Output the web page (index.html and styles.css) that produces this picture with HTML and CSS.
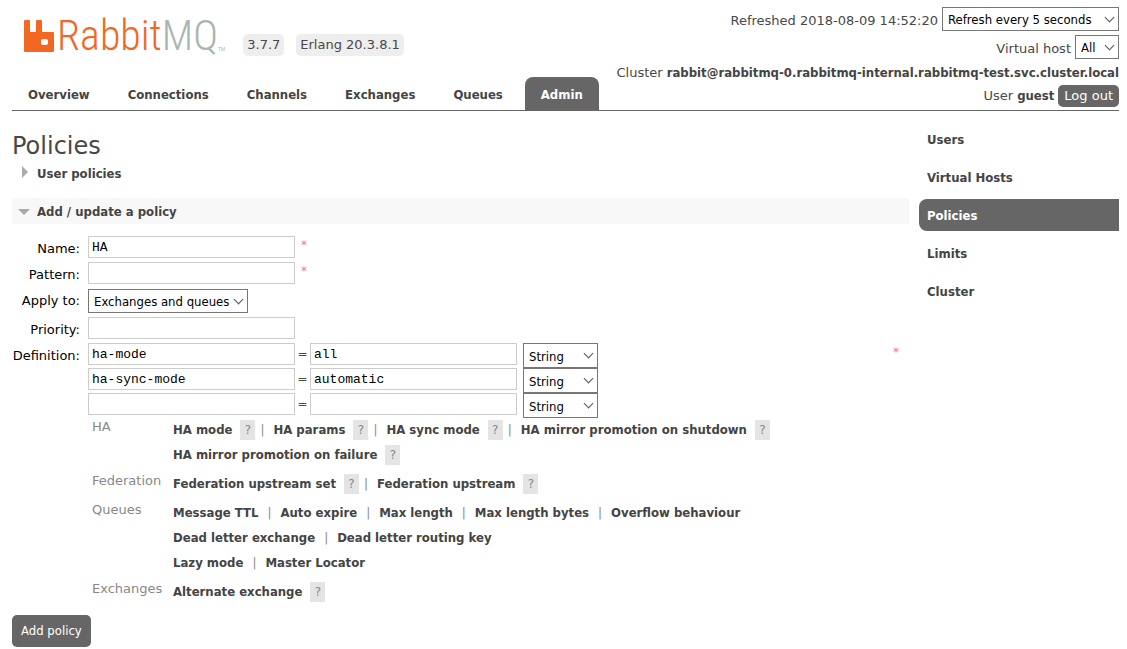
FILE: index.html
```html
<!DOCTYPE html>
<html lang="en">
<head>
<meta charset="utf-8">
<title>RabbitMQ Management</title>
<link rel="stylesheet" href="styles.css">
</head>
<body>
<header class="header">
  <div class="brand-area">
    <div class="brand">
      <a class="logo" href="#" aria-label="RabbitMQ">
        <svg class="logo-mark" viewBox="0 0 30 33" width="30" height="33" aria-hidden="true"><path fill="#f26822" fill-rule="evenodd" d="M1 1H5Q6 1 6 2V12Q6 13 7 13H11Q12 13 12 12V2Q12 1 13 1H17Q18 1 18 2V12Q18 13 19 13H29Q30 13 30 14V32Q30 33 29 33H1Q0 33 0 32V2Q0 1 1 1ZM19 20Q17 20 17 22V24Q17 26 19 26H22Q24 26 24 24V22Q24 20 22 20Z"/></svg>
        <span class="logo-text">Rabbit<span class="logo-mq">MQ</span></span>
        <span class="logo-tm">TM</span>
      </a>
      <span class="version">3.7.7</span>
      <span class="version">Erlang 20.3.8.1</span>
    </div>
    <nav class="tabs" aria-label="Main">
      <a href="#">Overview</a>
      <a href="#">Connections</a>
      <a href="#">Channels</a>
      <a href="#">Exchanges</a>
      <a href="#">Queues</a>
      <a href="#" class="selected" aria-current="page">Admin</a>
    </nav>
  </div>
  <div class="status">
    <div class="status-row"><label for="refresh">Refreshed 2018-08-09 14:52:20</label><span class="select select-refresh"><select id="refresh"><option>Refresh every 5 seconds</option></select></span></div>
    <div class="status-row status-host"><label for="vhost">Virtual host</label><span class="select select-host"><select id="vhost"><option>All</option></select></span></div>
    <div class="status-row">Cluster <b>rabbit@rabbitmq-0.rabbitmq-internal.rabbitmq-test.svc.cluster.local</b></div>
    <div class="status-row">User <b>guest</b><button class="logout" type="button">Log out</button></div>
  </div>
</header>
<div class="page">
  <main class="main">
    <h1>Policies</h1>
    <h2 class="section closed">User policies</h2>
    <h2 class="section open">Add / update a policy</h2>
    <form class="policy">
      <div class="fields">
        <label for="name">Name:</label>
        <div class="field"><input id="name" type="text" value="HA"><span class="mand">*</span></div>
        <label for="pattern">Pattern:</label>
        <div class="field"><input id="pattern" type="text"><span class="mand">*</span></div>
        <label for="apply">Apply to:</label>
        <div class="field field-select"><span class="select select-apply"><select id="apply"><option>Exchanges and queues</option></select></span></div>
        <label for="priority">Priority:</label>
        <div class="field"><input id="priority" type="text"></div>
        <label for="key1">Definition:</label>
        <div class="definition">
          <div class="definition-body">
            <div class="pair"><input id="key1" type="text" value="ha-mode"><span class="eq">=</span><input type="text" aria-label="Value 1" value="all"><span class="select select-type"><select aria-label="Type 1"><option>String</option></select></span></div>
            <div class="pair"><input type="text" aria-label="Key 2" value="ha-sync-mode"><span class="eq">=</span><input type="text" aria-label="Value 2" value="automatic"><span class="select select-type"><select aria-label="Type 2"><option>String</option></select></span></div>
            <div class="pair"><input type="text" aria-label="Key 3"><span class="eq">=</span><input type="text" aria-label="Value 3"><span class="select select-type"><select aria-label="Type 3"><option>String</option></select></span></div>
            <dl class="hints">
              <dt>HA</dt>
              <dd>
                <div class="links"><span><a href="#">HA mode</a><button type="button" class="help">?</button></span><span><a href="#">HA params</a><button type="button" class="help">?</button></span><span><a href="#">HA sync mode</a><button type="button" class="help">?</button></span><span><a href="#">HA mirror promotion on shutdown</a><button type="button" class="help">?</button></span></div>
                <div class="links"><span><a href="#">HA mirror promotion on failure</a><button type="button" class="help">?</button></span></div>
              </dd>
              <dt>Federation</dt>
              <dd>
                <div class="links"><span><a href="#">Federation upstream set</a><button type="button" class="help">?</button></span><span><a href="#">Federation upstream</a><button type="button" class="help">?</button></span></div>
              </dd>
              <dt>Queues</dt>
              <dd>
                <div class="links plain"><span><a href="#">Message TTL</a></span><span><a href="#">Auto expire</a></span><span><a href="#">Max length</a></span><span><a href="#">Max length bytes</a></span><span><a href="#">Overflow behaviour</a></span></div>
                <div class="links plain"><span><a href="#">Dead letter exchange</a></span><span><a href="#">Dead letter routing key</a></span></div>
                <div class="links plain"><span><a href="#">Lazy mode</a></span><span><a href="#">Master Locator</a></span></div>
              </dd>
              <dt>Exchanges</dt>
              <dd>
                <div class="links"><span><a href="#">Alternate exchange</a><button type="button" class="help">?</button></span></div>
              </dd>
            </dl>
          </div>
          <span class="mand">*</span>
        </div>
      </div>
      <button class="submit" type="submit">Add policy</button>
    </form>
  </main>
  <nav class="side" aria-label="Admin">
    <a href="#">Users</a>
    <a href="#">Virtual Hosts</a>
    <a href="#" class="selected" aria-current="page">Policies</a>
    <a href="#">Limits</a>
    <a href="#">Cluster</a>
  </nav>
</div>
</body>
</html>
```
FILE: styles.css
```css
* { box-sizing: border-box; }
body {
  margin: 0;
  padding: 0 8px 0 12px;
  background: #fff;
  color: #484848;
  font: 13px/18px "DejaVu Sans", Verdana, sans-serif;
}
a, b, .section { font-family: "DejaVu Sans Condensed", Tahoma, sans-serif; }
a { color: #444; font-weight: bold; text-decoration: none; }
b { color: #444; }
button, input, select { font: inherit; margin: 0; }

.header {
  display: flex;
  justify-content: space-between;
  height: 111px;
  border-bottom: 1px solid #666;
}
.brand-area { display: flex; flex-direction: column; justify-content: space-between; }
.brand { display: flex; align-items: flex-start; padding: 19px 0 0 12px; }
.logo { display: flex; height: 33px; margin-right: 18px; font-weight: normal; }
.logo-mark { margin-right: 3px; }
.logo-text {
  font-family: "Roboto Condensed", "Liberation Sans Narrow", sans-serif;
  font-size: 42px;
  font-weight: 300;
  line-height: 34px;
  color: #f26822;
}
.logo-mq { color: #a9b5b0; }
.logo-tm { align-self: flex-end; font: 5px/6px "Liberation Sans", sans-serif; color: #a9b5b0; }
.version {
  margin: 15px 12px 0 0;
  padding: 2px 4px;
  border-radius: 5px;
  background: #eee;
}
.tabs { display: flex; gap: 6px; }
.tabs a { padding: 9px 16px 7px; border-radius: 8px 8px 0 0; line-height: 17px; }
a.selected { background: #666; color: #fff; }

.status { padding-top: 7px; white-space: nowrap; }
.status-row { display: flex; justify-content: flex-end; align-items: center; gap: 4px; min-height: 23px; }
.status-row label { padding-top: 3px; }
.status-host { margin: 4px 0 2px; }

.select { position: relative; display: inline-flex; height: 24px; }
.select::after {
  content: "";
  position: absolute;
  right: 6px;
  top: 7px;
  width: 6px;
  height: 6px;
  border: solid #555;
  border-width: 0 1px 1px 0;
  transform: rotate(45deg);
  pointer-events: none;
}
select {
  width: 100%;
  padding: 2px 5px 0;
  appearance: none;
  border: 1px solid #777;
  border-radius: 0;
  background: #fff;
  color: #000;
  font-family: "DejaVu Sans Condensed", Tahoma, sans-serif;
}
.select-refresh { width: 177px; }
.select-host { width: 44px; }
.select-apply { width: 160px; }
.select-type { width: 75px; height: 25px; margin-left: 6px; }
.logout, .submit { border: 0; background: #666; color: #fff; border-radius: 5px; }
.logout { padding: 2px 6px; }

.page { display: flex; gap: 10px; }
.main { flex: 1; min-width: 0; }
h1 { margin: 20px 0 0; font-size: 24px; line-height: 30px; font-weight: normal; }
.section {
  display: flex;
  align-items: center;
  margin: 0;
  height: 26px;
  color: #444;
  font-size: 13px;
}
.section::before { content: ""; border: solid transparent; }
.closed { margin-bottom: 11px; }
.closed::before { margin: 0 9px 4px 10px; border-width: 6px 0 6px 6px; border-left-color: #aaa; }
.open { padding-top: 1px; background: #f8f8f8; }
.open::before { margin: 0 7px 0 6px; border-width: 6px 6px 0; border-top-color: #aaa; }

.fields { display: grid; grid-template-columns: 68px 1fr; gap: 4px 8px; padding-top: 12px; }
.fields label { padding-top: 4px; text-align: right; color: #000; }
.field { display: flex; align-items: flex-start; }
.field-select { height: 25px; align-items: flex-end; }
input {
  width: 207px;
  height: 22px;
  padding: 0 3px;
  border: 1px solid #ccc;
  background: #fff;
  color: #000;
  font-family: "Liberation Mono", "Courier New", monospace;
}
.mand { width: 22px; padding-left: 6px; color: #f77; font-size: 12px; }
.definition { display: flex; }
.definition-body { flex: 1; }
.pair { display: flex; align-items: flex-start; height: 25px; }
.eq { width: 15px; text-align: center; font-size: 12px; line-height: 22px; }

.hints { display: grid; grid-template-columns: 81px 1fr; row-gap: 4px; margin: -1px 0 0; padding-left: 4px; }
.hints dt { color: #888; line-height: 20px; }
.hints dd { margin: 0; }
.links { display: flex; height: 25px; align-items: center; }
.links > span { display: flex; align-items: center; }
.links > span + span::before { content: "|"; width: 5px; margin: 0 8px 0 5px; font-size: 12px; color: #888; }
.links.plain > span + span::before { margin-left: 9px; }
.help {
  width: 15px;
  height: 20px;
  margin-left: 8px;
  padding: 0;
  border: 0;
  background: #e4e4e4;
  color: #888;
  font-size: 12px;
}
.submit {
  height: 32px;
  margin-top: 11px;
  padding: 0 9px;
  font-family: "DejaVu Sans Condensed", Tahoma, sans-serif;
}

.side { display: flex; flex-direction: column; gap: 6px; width: 200px; padding-top: 12px; }
.side a { padding: 8px 8px 6px; border-radius: 8px 0 0 8px; }
```
